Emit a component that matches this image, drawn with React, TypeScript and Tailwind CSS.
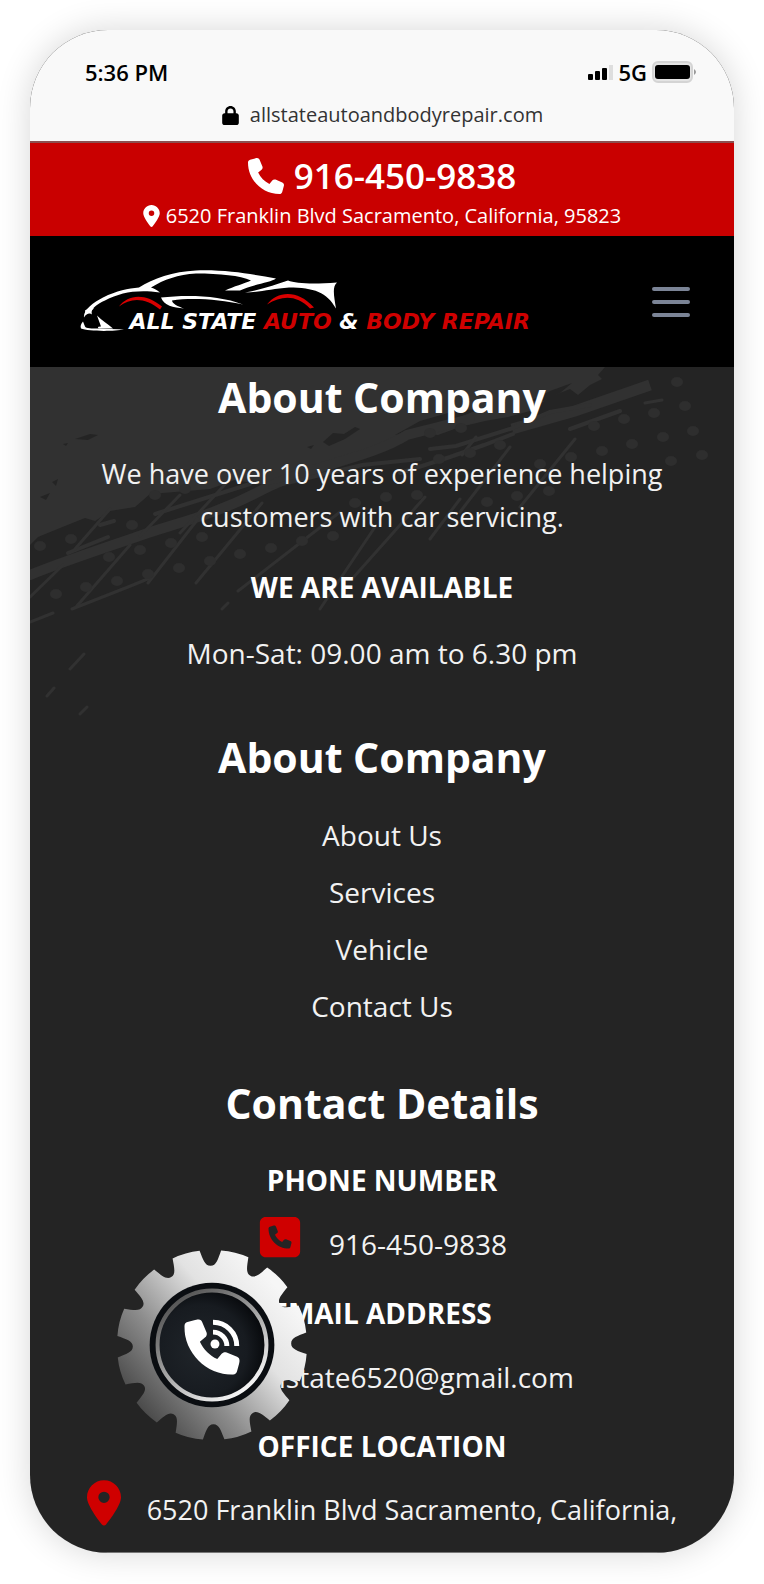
import React from "react";
import { FaEnvelope, FaLocationDot, FaLock, FaPhone, FaSquarePhone } from "react-icons/fa6";

const links = ["About Us", "Services", "Vehicle", "Contact Us"];

const point = (radius: number, degrees: number) => {
  const a = (degrees * Math.PI) / 180;
  return `${(100 + radius * Math.cos(a)).toFixed(2)} ${(100 + radius * Math.sin(a)).toFixed(2)}`;
};

/* Twelve teeth separated by rounded notches. */
const gearPath =
  Array.from({ length: 12 }, (_, i) => {
    const c = i * 30 - 91;
    return [
      `${i === 0 ? "M" : "L"}${point(96, c - 6.5)}`,
      `C${point(87, c - 5)} ${point(80, c - 4)} ${point(80, c)}`,
      `C${point(80, c + 4)} ${point(87, c + 5)} ${point(96, c + 6.5)}`,
      `Q${point(97.5, c + 15)} ${point(96, c + 23.5)}`,
    ].join("");
  }).join("") + "Z";

function Gear() {
  return (
    <svg viewBox="0 0 200 200" className="size-full" aria-hidden="true">
      <defs>
        <linearGradient id="steel" x1="0.1" y1="0.85" x2="0.85" y2="0.2">
          <stop offset="0" stopColor="#454545" />
          <stop offset="0.35" stopColor="#8c8c8c" />
          <stop offset="0.7" stopColor="#e2e2e2" />
          <stop offset="1" stopColor="#f6f6f6" />
        </linearGradient>
        <linearGradient id="ring" x1="0.1" y1="0" x2="0.8" y2="1">
          <stop offset="0" stopColor="#444" />
          <stop offset="0.45" stopColor="#999" />
          <stop offset="1" stopColor="#fff" />
        </linearGradient>
        <radialGradient id="hub" cx="0.4" cy="0.55" r="0.6">
          <stop offset="0" stopColor="#20252a" />
          <stop offset="0.7" stopColor="#171b20" />
          <stop offset="1" stopColor="#07090c" />
        </radialGradient>
      </defs>
      <path d={gearPath} fill="url(#steel)" />
      <circle cx="100" cy="100" r="63" fill="#0a0d11" />
      <circle cx="100" cy="100" r="55" fill="url(#hub)" stroke="url(#ring)" strokeWidth="4" />
      <svg x="72" y="74" width="56" height="56" viewBox="0 0 512 512">
        <path
          fill="#fff"
          d="M164.900 24.600c-7.700-18.600-28-28.500-47.400-23.200l-88 24C12.100 30.200 0 46 0 64c0 247.400 200.600 448 448 448 18 0 33.800-12.100 38.600-29.500l24-88c5.300-19.400-4.600-39.700-23.200-47.400l-96-40c-16.300-6.800-35.200-2.100-46.300 11.600L304.700 368C234.300 334.700 177.300 277.700 144 207.300l49.300-40.300c13.700-11.200 18.400-30 11.600-46.300l-40-96z"
        />
      </svg>
      <circle cx="103" cy="99" r="4.500" fill="#fff" />
      <path d="M101 87a14 14 0 0 1 14 14M101 77a24 24 0 0 1 24 24" fill="none" stroke="#fff" strokeWidth="5" />
    </svg>
  );
}

function Logo() {
  return (
    <a href="#home" className="relative flex h-[63px] w-[450px] items-end justify-end" aria-label="All State Auto & Body Repair">
      <svg viewBox="0 0 450 62" className="absolute inset-0 size-full" aria-hidden="true">
        <g fill="#fff">
          <path d="M1 58C0 56 1 53 3 51L5 56C6 58 12 58 18 58L44 59C34 61 8 61 1 58Z" />
          <path d="M17 45C22 50 27 53 33 58H19C17 57 18 56 21 56Z" />
          <path d="M4 47C3 40 13 32 23 27C37 20 48 18 59 17C73 8 93 1 116 0C148-1 172 4 196 8C191 12 172 14 160 20L145 20C154 16 164 13 171 10C160 5 140 3 116 3C98 4 84 9 71 17C74 18 76 19 80 22C56 19 41 22 25 30C16 34 10 39 12 44C10 42 6 43 4 47Z" />
          <path d="M165 22C182 19 196 14 208 10C216 13 232 14 257 12C252 16 254 26 256 38C247 22 234 17 209 17C192 18 180 22 165 22Z" />
          <path d="M81 27C108 24 140 25 163 34C140 29 112 27 92 30C92 33 98 36 104 38C93 37 84 35 81 27Z" />
          <path d="M5 40L10 37L14 38L6 44Z" />
        </g>
        <path d="M39 36C48 24 65 22 82 36L80 39C65 27 51 27 39 36ZM187 34C197 21 217 18 234 37L230 38C216 24 202 25 187 34Z" fill="#d80000" />
      </svg>
      <span className="relative font-['DejaVu_Sans',sans-serif] text-[22px] leading-[22px] font-bold whitespace-nowrap text-white italic">
        ALL STATE <span className="text-[#cf0000]">AUTO</span> &amp; <span className="text-[#cf0000]">BODY REPAIR</span>
      </span>
    </a>
  );
}

const dots = [
  [647, 21], [655, 45], [663, 70], [672, 94], [624, 52], [633, 76], [641, 100], [594, 58], [602, 83],
  [564, 65], [572, 90], [541, 96], [510, 103], [519, 130], [487, 135], [457, 141], [400, 72], [431, 67],
  [409, 98], [440, 92], [470, 84], [387, 134], [356, 136], [325, 142], [303, 175], [272, 180], [241, 187],
  [210, 193], [180, 200], [149, 207], [118, 213], [87, 220], [56, 226], [26, 233], [172, 176], [141, 182],
  [110, 189], [79, 196], [102, 164], [41, 178], [10, 185], [125, 134], [155, 128],
];

function TireTrack() {
  return (
    <svg viewBox="0 0 704 360" className="absolute inset-x-0 top-0 w-full" aria-hidden="true">
      <path
        d="M0 0H575L568 8L572 12L560 18L548 28L540 22L520 30L500 44L478 50L455 54L430 60L408 68L390 66L370 76L350 84L330 90L305 94L288 98L250 112L235 118L205 113L180 122L145 125L120 127L105 140L80 144L65 154L55 151L30 161L8 170L0 178Z"
        fill="#313131"
      />
      <g fill="#242424">
        <path d="M45 72L60 67L68 68L58 73ZM33 77L38 76L36 79ZM293 75L303 66L314 67L325 60L330 62L315 72L299 79ZM277 80L284 78L281 82ZM310 92L330 84L345 82L355 84L340 94ZM10 130L20 126L16 133ZM22 115L28 112L26 119Z" />
        <path d="M365 68L390 54L425 44L450 42L420 54L395 63ZM500 34L520 24L542 16L530 26L514 34Z" />
      </g>
      <g fill="none" stroke="#313131" strokeLinecap="round">
        <path d="M0 208C40 192 78 180 112 168S180 150 230 124S338 92 377 68L440 52" strokeWidth="10" />
        <path d="M482 62L545 44L620 18" strokeWidth="11" strokeLinecap="butt" />
        <path d="M38 186L78 170M70 158L84 154M125 147L220 117M240 120L332 98L390 92M400 82L426 79L480 62L520 45L560 38M370 106L420 90L454 78L483 67M540 62L590 44" strokeWidth="4" />
        <path d="M80 142L45 182M150 128L110 169M200 112L150 166M100 178L46 240M168 152L118 216M232 136L166 216M310 145L208 224M345 160L290 242M395 130L322 212M430 132L400 172M545 72L490 140M480 80L430 145M446 70L432 88M33 198L0 230" strokeWidth="3" />
        <path d="M42 242L98 220L120 211M0 255L23 246M40 302L54 287M17 329L24 321M50 347L57 340M192 242L198 236M615 36L632 33" strokeWidth="3" />
      </g>
      <g fill="#2e2e2e">
        {dots.map(([x, y]) => (
          <ellipse key={`${x}-${y}`} cx={x} cy={y - 6} rx="6" ry="5" />
        ))}
      </g>
    </svg>
  );
}

const h2 = "text-[41px] leading-[52px] font-bold text-white";
const h3 = "text-[28px] leading-[36px] font-bold text-white";
const row = "mt-[19px] flex items-start justify-center gap-[26px] leading-[54px] whitespace-nowrap";

export default function App() {
  return (
    <div className="bg-white p-[30px] font-['Open_Sans','Noto_Sans',sans-serif]">
      <div className="relative overflow-hidden rounded-[78px] bg-[#242424] shadow-[0_0_34px_rgba(0,0,0,0.16)]">
        <header>
          <div className="bg-[#f9f9f9] pt-[26px] pb-3 text-black">
            <div className="flex h-8 items-center justify-between pr-9 pl-[55px] text-[22px] font-semibold">
              <span>5:36 PM</span>
              <span className="flex items-center gap-[5px]">
                <svg viewBox="0 0 26 18" className="h-[18px] w-[26px]" aria-hidden="true">
                  <rect x="1" y="11" width="5" height="6" rx="1" />
                  <rect x="8" y="8" width="5" height="9" rx="1" />
                  <rect x="15" y="5" width="5" height="12" rx="1" />
                  <rect x="22" y="2" width="4" height="15" fill="#dedede" />
                </svg>
                <span>5G</span>
                <svg viewBox="0 0 46 22" className="h-[22px] w-[46px]" aria-hidden="true">
                  <rect x="1" y="1" width="39" height="20" rx="5" fill="#e4e4e4" stroke="#d4d4d4" strokeWidth="2" />
                  <rect x="3" y="4" width="35" height="14" rx="3" />
                  <path d="M42 8q4 3 0 6z" fill="#999" />
                </svg>
              </span>
            </div>
            <div className="mt-[13px] flex h-7 items-center justify-center gap-[10px] text-[20px] text-[#333]">
              <FaLock className="size-[19px] text-black" />
              <span>allstateautoandbodyrepair.com</span>
            </div>
          </div>
          <div className="border-t-2 border-[#8c5050] bg-[#c90000] pt-[13px] pb-[6px] text-white">
            <a href="tel:9164509838" className="flex h-10 items-center justify-center gap-[10px] text-[35px] font-semibold">
              <FaPhone className="size-9" />
              <span>916-450-9838</span>
            </a>
            <div className="mt-[6px] flex h-7 items-center justify-center gap-[6px] text-[20px]">
              <FaLocationDot className="h-[22px] w-[17px]" />
              <span>6520 Franklin Blvd Sacramento, California, 95823</span>
            </div>
          </div>
          <nav className="flex items-center justify-between bg-black py-[34px] pr-11 pl-[50px]">
            <Logo />
            <button type="button" aria-label="Open menu" className="flex w-[38px] flex-col gap-[9px]">
              <span className="h-1 rounded-full bg-[#7b8496]" />
              <span className="h-1 rounded-full bg-[#7b8496]" />
              <span className="h-1 rounded-full bg-[#7b8496]" />
            </button>
          </nav>
        </header>

        <footer className="relative border-b border-[#777] px-[55px] pt-1 pb-[15px] text-center text-[28px] leading-9 text-[#f2f2f2]">
          <TireTrack />
          <section className="relative">
            <h2 className={h2}>About Company</h2>
            <p className="mt-[29px] text-[27px] leading-[43px]">
              We have over 10 years of experience helping customers with car servicing.
            </p>
            <h3 className={`mt-[31px] ${h3}`}>WE ARE AVAILABLE</h3>
            <p className="mt-[30px]">Mon-Sat: 09.00 am to 6.30 pm</p>
          </section>
          <section className="relative mt-[60px]">
            <h2 className={h2}>About Company</h2>
            <ul className="mt-[34px] flex flex-col items-center gap-[21px]">
              {links.map((label) => (
                <li key={label}>
                  <a href={`#${label.toLowerCase().replace(" ", "-")}`}>{label}</a>
                </li>
              ))}
            </ul>
          </section>
          <section className="relative mt-[53px]">
            <h2 className={h2}>Contact Details</h2>
            <h3 className={`mt-[33px] ${h3}`}>PHONE NUMBER</h3>
            <p className={row}>
              <FaSquarePhone className="-mt-[3px] h-[46px] w-[46px] shrink-0 text-[#cf0000]" />
              <a href="tel:9164509838">916-450-9838</a>
            </p>
            <h3 className={`mt-[24px] ${h3}`}>EMAIL ADDRESS</h3>
            <p className={row}>
              <FaEnvelope className="size-10 shrink-0 text-[#cf0000]" />
              <a href="mailto:allstate6520@gmail.com">allstate6520@gmail.com</a>
            </p>
            <h3 className={`mt-[24px] ${h3}`}>OFFICE LOCATION</h3>
            <p className={`text-[27px] ${row}`}>
              <FaLocationDot className="-mt-[3px] h-[46px] w-[34px] shrink-0 text-[#cf0000]" />
              <span>6520 Franklin Blvd Sacramento, California,</span>
            </p>
          </section>
        </footer>

        <a href="tel:9164509838" aria-label="Call now" className="absolute bottom-[109px] left-[83px] size-[198px]">
          <Gear />
        </a>
      </div>
    </div>
  );
}
